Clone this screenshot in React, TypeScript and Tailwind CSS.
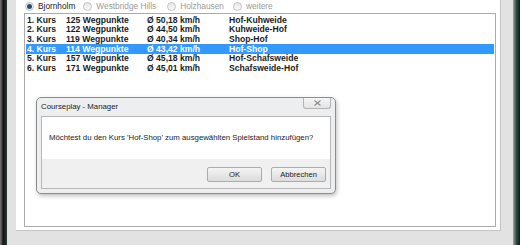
import type { ReactNode } from 'react'

const rows = [
  { nr: '1. Kurs', wp: '125 Wegpunkte', speed: 'Ø 50,18 km/h', name: 'Hof-Kuhweide' },
  { nr: '2. Kurs', wp: '122 Wegpunkte', speed: 'Ø 44,50 km/h', name: 'Kuhweide-Hof' },
  { nr: '3. Kurs', wp: '119 Wegpunkte', speed: 'Ø 40,34 km/h', name: 'Shop-Hof' },
  { nr: '4. Kurs', wp: '114 Wegpunkte', speed: 'Ø 43,42 km/h', name: 'Hof-Shop' },
  { nr: '5. Kurs', wp: '157 Wegpunkte', speed: 'Ø 45,18 km/h', name: 'Hof-Schafsweide' },
  { nr: '6. Kurs', wp: '171 Wegpunkte', speed: 'Ø 45,01 km/h', name: 'Schafsweide-Hof' },
]

function Radio({ label, checked, className }: { label: string; checked?: boolean; className?: string }) {
  return (
    <div className={`flex items-center ${className ?? ''}`}>
      <span className="flex h-[9px] w-[9px] items-center justify-center rounded-full border border-[#c2c2c2] bg-gradient-to-b from-[#e6e6e6] to-[#fafafa]">
        {checked && <span className="h-[5px] w-[5px] rounded-full bg-[#2a4d73]" />}
      </span>
      <span className={`ml-[4px] text-[8.3px] ${checked ? 'text-[#222]' : 'text-[#9a9a9a]'}`}>{label}</span>
    </div>
  )
}

function Button({ children }: { children: ReactNode }) {
  return (
    <button className="flex h-[15px] w-[55px] items-center justify-center rounded-[2px] border border-[#acacac] bg-gradient-to-b from-[#f4f4f4] to-[#dcdcdc] text-[7.6px] text-[#222]">
      {children}
    </button>
  )
}

export default function App() {
  return (
    <div
      className="flex h-[245px] w-[520px] overflow-hidden bg-[#dcdcdc]"
      style={{ fontFamily: '"Liberation Sans", Arial, sans-serif' }}
    >
      {/* desktop strip left */}
      <div className="w-[7px] bg-gradient-to-r from-[#7a7a7a] via-[#101513] to-[#2c3a36]" />

      {/* window body */}
      <div className="flex w-[506px] flex-col bg-[#e2e2e2]">
        <div className="flex h-[231px] pl-[9px] pr-[12px]">
          <div className="flex flex-1 flex-col border-r border-b border-[#c4c4c4] bg-white pl-[8px] pr-[4px]">
            <div className="flex h-[13px] items-center pl-[1px]">
              <Radio label="Bjornholm" checked />
              <Radio label="Westbridge Hills" className="ml-[8px]" />
              <Radio label="Holzhausen" className="ml-[11px]" />
              <Radio label="weitere" className="ml-[9px]" />
            </div>

            <div className="relative h-[214px] border border-[#ababab] bg-white pt-[1px] pl-[1px] pr-[1px]">
              {rows.map((r, i) => (
                <div
                  key={r.nr}
                  className={`flex h-[9.7px] items-center text-[8.6px] font-bold leading-none ${
                    i === 3 ? 'bg-[#3399ff] text-white' : 'text-[#1c1c1c]'
                  }`}
                >
                  <span className="w-[40px] pl-[1px]">{r.nr}</span>
                  <span className="w-[81px]">{r.wp}</span>
                  <span className="w-[82px]">{r.speed}</span>
                  <span>{r.name}</span>
                </div>
              ))}

              {/* modal dialog */}
              <div className="absolute left-[11px] top-[83px] flex h-[97px] w-[300px] flex-col rounded-[5px] border border-[#8d8d8d] bg-[#eceef0] shadow-[1px_2px_4px_rgba(0,0,0,0.25)]">
                <div className="flex h-[18px] items-start justify-between">
                  <span className="ml-[4px] mt-[3px] text-[7.8px] text-[#222]">Courseplay - Manager</span>
                  <div className="mr-[4px] flex h-[11px] w-[28px] items-center justify-center rounded-b-[3px] border border-t-0 border-[#b3b3b3] bg-gradient-to-b from-[#f6f6f6] to-[#e4e4e4]">
                    <svg width="7" height="6" viewBox="0 0 7 6">
                      <path d="M0.5 0.5 L6.5 5.5 M6.5 0.5 L0.5 5.5" stroke="#8a8a8a" strokeWidth="1.1" fill="none" />
                    </svg>
                  </div>
                </div>
                <div className="mx-[4px] mb-[4px] flex flex-1 flex-col border border-[#b7b7b7]">
                  <div className="flex h-[42px] items-center bg-white pl-[7px] text-[7.8px] text-[#222]">
                    Möchtest du den Kurs 'Hof-Shop' zum ausgewählten Spielstand hinzufügen?
                  </div>
                  <div className="flex flex-1 items-start justify-end gap-[9px] bg-[#f0f0f0] pr-[4px] pt-[8px]">
                    <Button>OK</Button>
                    <Button>Abbrechen</Button>
                  </div>
                </div>
              </div>
            </div>
          </div>
        </div>
      </div>

      {/* right side */}
      <div className="w-[7px] bg-gradient-to-r from-[#9aa7a2] via-[#2d4a42] to-[#0f1a17]" />
    </div>
  )
}
